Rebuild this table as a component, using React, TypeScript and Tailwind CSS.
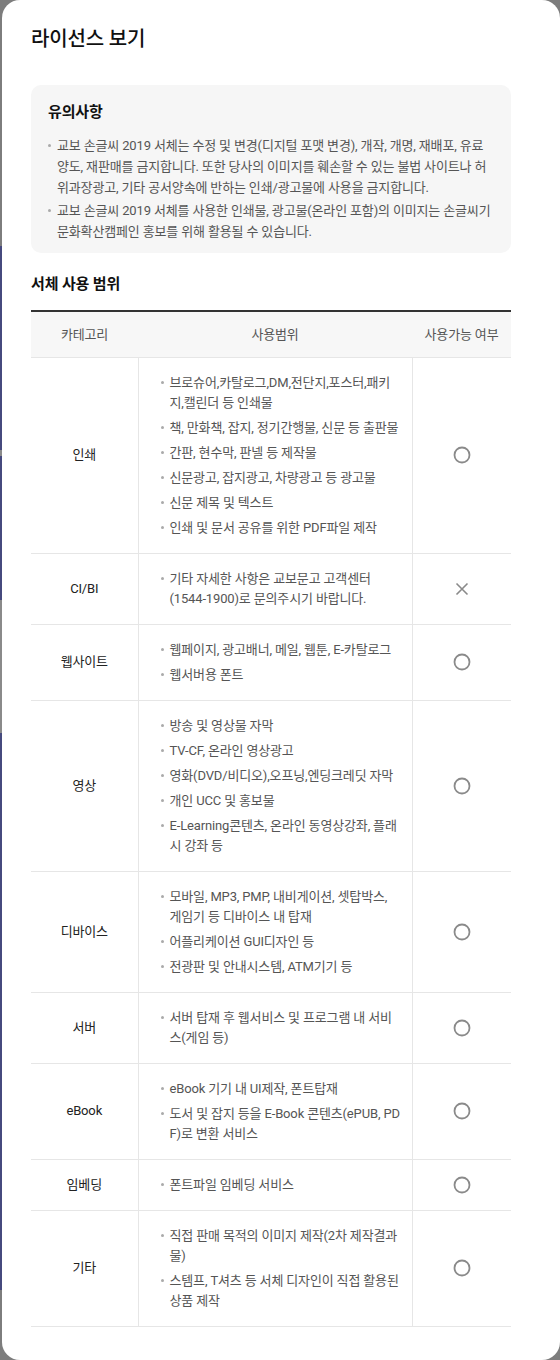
import React from 'react';

type Row = { category: string; items: string[]; allowed: boolean };

const rows: Row[] = [
  {
    category: '인쇄',
    items: [
      '브로슈어,카탈로그,DM,전단지,포스터,패키지,캘린더 등 인쇄물',
      '책, 만화책, 잡지, 정기간행물, 신문 등 출판물',
      '간판, 현수막, 판넬 등 제작물',
      '신문광고, 잡지광고, 차량광고 등 광고물',
      '신문 제목 및 텍스트',
      '인쇄 및 문서 공유를 위한 PDF파일 제작',
    ],
    allowed: true,
  },
  {
    category: 'CI/BI',
    items: ['기타 자세한 사항은 교보문고 고객센터\n(1544-1900)로 문의주시기 바랍니다.'],
    allowed: false,
  },
  {
    category: '웹사이트',
    items: ['웹페이지, 광고배너, 메일, 웹툰, E-카탈로그', '웹서버용 폰트'],
    allowed: true,
  },
  {
    category: '영상',
    items: [
      '방송 및 영상물 자막',
      'TV-CF, 온라인 영상광고',
      '영화(DVD/비디오),오프닝,엔딩크레딧 자막',
      '개인 UCC 및 홍보물',
      'E-Learning콘텐츠, 온라인 동영상강좌, 플래시 강좌 등',
    ],
    allowed: true,
  },
  {
    category: '디바이스',
    items: [
      '모바일, MP3, PMP, 내비게이션, 셋탑박스, 게임기 등 디바이스 내 탑재',
      '어플리케이션 GUI디자인 등',
      '전광판 및 안내시스템, ATM기기 등',
    ],
    allowed: true,
  },
  {
    category: '서버',
    items: ['서버 탑재 후 웹서비스 및 프로그램 내 서비스(게임 등)'],
    allowed: true,
  },
  {
    category: 'eBook',
    items: ['eBook 기기 내 UI제작, 폰트탑재', '도서 및 잡지 등을 E-Book 콘텐츠(ePUB, PDF)로 변환 서비스'],
    allowed: true,
  },
  {
    category: '임베딩',
    items: ['폰트파일 임베딩 서비스'],
    allowed: true,
  },
  {
    category: '기타',
    items: ['직접 판매 목적의 이미지 제작(2차 제작결과물)', '스템프, T셔츠 등 서체 디자인이 직접 활용된 상품 제작'],
    allowed: true,
  },
];

const notices = [
  '교보 손글씨 2019 서체는 수정 및 변경(디지털 포맷 변경), 개작, 개명, 재배포, 유료양도, 재판매를 금지합니다. 또한 당사의 이미지를 훼손할 수 있는 불법 사이트나 허위과장광고, 기타 공서양속에 반하는 인쇄/광고물에 사용을 금지합니다.',
  '교보 손글씨 2019 서체를 사용한 인쇄물, 광고물(온라인 포함)의 이미지는 손글씨기 문화확산캠페인 홍보를 위해 활용될 수 있습니다.',
];

// bullet item with a small grey dot
const Bullet: React.FC<{ text: string; lh: string }> = ({ text, lh }) => (
  <li className={`flex ${lh}`}>
    <span className="flex h-[1lh] w-[9px] shrink-0 items-center">
      <span className="h-[3px] w-[3px] rounded-full bg-[#aaa]" />
    </span>
    <span className="whitespace-pre-line">{text}</span>
  </li>
);

const Circle = () => (
  <svg width="18" height="18" viewBox="0 0 18 18" fill="none">
    <circle cx="9" cy="9" r="7.5" stroke="#8a8a8a" strokeWidth="1.8" />
  </svg>
);

const Cross = () => (
  <svg width="16" height="16" viewBox="0 0 16 16" fill="none">
    <path d="M2.5 2.5 L13.5 13.5 M13.5 2.5 L2.5 13.5" stroke="#8a8a8a" strokeWidth="1.6" />
  </svg>
);

const strips = [
  { h: 'h-[246px]', c: 'bg-[#7d7d7d]' },
  { h: 'h-[204px]', c: 'bg-[#464a7e]' },
  { h: 'h-[6px]', c: 'bg-[#8a8a8a]' },
  { h: 'h-[144px]', c: 'bg-[#464a7e]' },
  { h: 'h-[133px]', c: 'bg-[#8a8a8a]' },
  { h: 'h-[557px]', c: 'bg-[#464a7e]' },
  { h: 'h-[70px]', c: 'bg-[#7d7d7d]' },
];

const App: React.FC = () => {
  return (
    <div
      className="flex h-[1360px] w-[560px] overflow-hidden bg-[#7d7d7d] tracking-[-0.15px]"
      style={{ fontFamily: 'Roboto, "Noto Sans CJK KR", sans-serif' }}
    >
      {/* backdrop edge */}
      <div className="flex w-[2px] shrink-0 flex-col">
        {strips.map((s, i) => (
          <div key={i} className={`${s.h} ${s.c} shrink-0`} />
        ))}
      </div>

      {/* modal */}
      <div className="h-[1360px] flex-1 rounded-[18px] bg-white pl-[29px] pt-[25px]">
        <div className="w-[480px]">
          <h1 className="text-[20px] font-medium leading-[28px] text-[#111]">라이선스 보기</h1>

          {/* notice */}
          <div className="mt-[32px] rounded-[10px] bg-[#f6f6f6] pb-[11px] pl-[17px] pr-[18px] pt-[16px]">
            <h2 className="text-[15px] font-bold leading-[22px] text-[#111]">유의사항</h2>
            <ul className="mt-[12px] flex flex-col gap-[2px] text-[13px] text-[#555]">
              {notices.map((n) => (
                <Bullet key={n} text={n} lh="leading-[21px]" />
              ))}
            </ul>
          </div>

          {/* usage scope */}
          <h2 className="mt-[20px] text-[15px] font-bold leading-[22px] text-[#111]">서체 사용 범위</h2>
          <table className="mt-[15px] w-full table-fixed border-collapse border-t-2 border-[#333] text-[13px]">
            <colgroup>
              <col className="w-[107px]" />
              <col className="w-[274px]" />
              <col />
            </colgroup>
            <thead>
              <tr className="h-[46px] bg-[#f7f7f7] font-normal text-[#555]">
                <th className="border-b border-[#e6e6e6] font-normal">카테고리</th>
                <th className="border-b border-[#e6e6e6] font-normal">사용범위</th>
                <th className="border-b border-[#e6e6e6] font-normal">사용가능 여부</th>
              </tr>
            </thead>
            <tbody>
              {rows.map((r) => (
                <tr key={r.category} className="border-b border-[#e6e6e6]">
                  <td className="border-r border-[#e6e6e6] text-center text-[#222]">{r.category}</td>
                  <td className="border-r border-[#e6e6e6] py-[15px] pl-[22px] pr-[10px]">
                    <ul className="flex flex-col gap-[5px] break-all text-[#555]">
                      {r.items.map((it) => (
                        <Bullet key={it} text={it} lh="leading-[20px]" />
                      ))}
                    </ul>
                  </td>
                  <td>
                    <div className="flex justify-center">{r.allowed ? <Circle /> : <Cross />}</div>
                  </td>
                </tr>
              ))}
            </tbody>
          </table>
        </div>
      </div>
    </div>
  );
};

export default App;
